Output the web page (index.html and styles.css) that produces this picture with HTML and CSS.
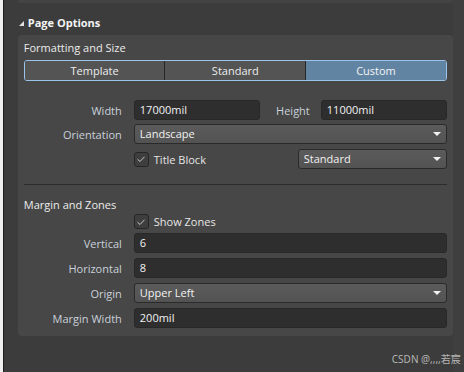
FILE: index.html
```html
<!DOCTYPE html>
<html lang="en">
<head>
    <meta charset="UTF-8">
    <title>Page Options</title>
    <link rel="stylesheet" href="styles.css">
</head>
<body>
    <div class="side"></div>

    <main class="panel">
        <div class="prev-section"></div>

        <h2 class="section-head"><span class="caret"></span>Page Options</h2>

        <section class="card">
            <h3 class="group-title">Formatting and Size</h3>
            <div class="segmented">
                <button class="seg">Template</button>
                <button class="seg">Standard</button>
                <button class="seg active">Custom</button>
            </div>

            <div class="form-grid first">
                <label class="label">Width</label>
                <div class="pair">
                    <div class="input">17000mil</div>
                    <label class="label">Height</label>
                    <div class="input">11000mil</div>
                </div>

                <label class="label">Orientation</label>
                <div class="select">Landscape<span class="arrow"></span></div>

                <span></span>
                <div class="check-row">
                    <label class="check"><span class="box"><svg viewBox="0 0 10 10" width="10" height="10"><path d="M1.5 5.2 L4 7.5 L8.5 2.8" fill="none" stroke="#c9c9c9" stroke-width="1"/></svg></span>Title Block</label>
                    <div class="select small">Standard<span class="arrow"></span></div>
                </div>
            </div>

            <hr class="divider">

            <h3 class="group-title">Margin and Zones</h3>
            <div class="form-grid second">
                <span></span>
                <label class="check zones"><span class="box"><svg viewBox="0 0 10 10" width="10" height="10"><path d="M1.5 5.2 L4 7.5 L8.5 2.8" fill="none" stroke="#c9c9c9" stroke-width="1"/></svg></span>Show Zones</label>

                <label class="label">Vertical</label>
                <div class="input">6</div>

                <label class="label">Horizontal</label>
                <div class="input">8</div>

                <label class="label">Origin</label>
                <div class="select">Upper Left<span class="arrow"></span></div>

                <label class="label">Margin Width</label>
                <div class="input">200mil</div>
            </div>
        </section>

        <div class="watermark">CSDN @,,,,若宸</div>
    </main>

    <div class="scroll-track"></div>
</body>
</html>
```

FILE: styles.css
```css
* {
    margin: 0;
    padding: 0;
    box-sizing: border-box;
}

html, body {
    height: 100%;
}

body {
    display: flex;
    background-color: #3c3c3c;
    color: #e6e6e6;
    font-family: 'Open Sans', 'Noto Sans', 'Noto Sans CJK SC', sans-serif;
    font-size: 11px;
    overflow: hidden;
}

.side {
    width: 4px;
    background-color: #f0f0f0;
    border-right: 1px solid #1e1e1e;
}

.panel {
    flex: 1;
    display: flex;
    flex-direction: column;
    position: relative;
}

.scroll-track {
    width: 12px;
    background-color: #3f3f3f;
}

/* 上のセクションの端 */
.prev-section {
    height: 3px;
    margin-left: 14px;
    background-color: #444;
    border-radius: 0 0 4px 4px;
}

.section-head {
    display: flex;
    align-items: center;
    gap: 4px;
    margin: 11px 0 0 15px;
    height: 16px;
    font-size: 11px;
    font-weight: 700;
    color: #f4f4f4;
}

.caret {
    width: 0;
    height: 0;
    border-left: 5px solid transparent;
    border-bottom: 5px solid #e0e0e0;
    margin-top: 2px;
}

/* カード */
.card {
    margin: 5px 0 0 14px;
    width: 435px;
    background-color: #474747;
    border-radius: 4px;
    padding: 6px 6px 8px;
}

.group-title {
    font-size: 11px;
    font-weight: 400;
    color: #ececec;
    line-height: 14px;
    margin-bottom: 5px;
}

.segmented {
    display: flex;
    height: 21px;
    border: 1px solid #9cc3ea;
    border-radius: 3px;
    overflow: hidden;
}

.seg {
    flex: 1;
    background-color: #545454;
    color: #ececec;
    font: inherit;
    border: none;
    border-left: 1px solid #262626;
}

.seg:first-child {
    border-left: none;
}

.seg.active {
    background-color: #6284a3;
    color: #f4f4f4;
}

.form-grid {
    display: grid;
    grid-template-columns: 98px 1fr;
    column-gap: 12px;
    row-gap: 5px;
    align-items: center;
}

.form-grid.first {
    margin-top: 19px;
    row-gap: 4px;
}

.form-grid.second {
    margin-top: -3px;
}

.label {
    text-align: right;
    color: #c9d1da;
}

.pair {
    display: grid;
    grid-template-columns: 126px 1fr 126px;
    align-items: center;
    column-gap: 11px;
}

.input {
    height: 20px;
    line-height: 18px;
    padding: 0 5px;
    background-color: #2e2e2e;
    border: 1px solid #282828;
    border-radius: 3px;
    color: #f2f2f2;
}

.select {
    position: relative;
    height: 20px;
    line-height: 18px;
    padding: 0 5px;
    background: linear-gradient(#5b5b5b, #535353);
    border: 1px solid #2a2a2a;
    border-radius: 3px;
    color: #f2f2f2;
}

.arrow {
    position: absolute;
    right: 5px;
    top: 7px;
    width: 0;
    height: 0;
    border-left: 4px solid transparent;
    border-right: 4px solid transparent;
    border-top: 4px solid #f2f2f2;
}

.check-row {
    display: flex;
    justify-content: space-between;
    align-items: center;
    margin-top: 1px;
}

.select.small {
    width: 149px;
}

.check {
    display: flex;
    align-items: center;
    gap: 5px;
    color: #e6e6e6;
    height: 15px;
}

.check.zones {
    margin-bottom: -1px;
}

.box {
    display: flex;
    align-items: center;
    justify-content: center;
    width: 15px;
    height: 15px;
    background-color: #3e3e3e;
    border: 1px solid #262626;
    border-radius: 3px;
}

.divider {
    border: none;
    border-top: 1px solid #2c2c2c;
    margin: 15px 0 13px;
}

.watermark {
    position: absolute;
    right: -8px;
    bottom: 6px;
    font-size: 10px;
    color: #b4b4b4;
    font-family: 'Noto Sans', 'Noto Sans CJK SC', sans-serif;
}
```
